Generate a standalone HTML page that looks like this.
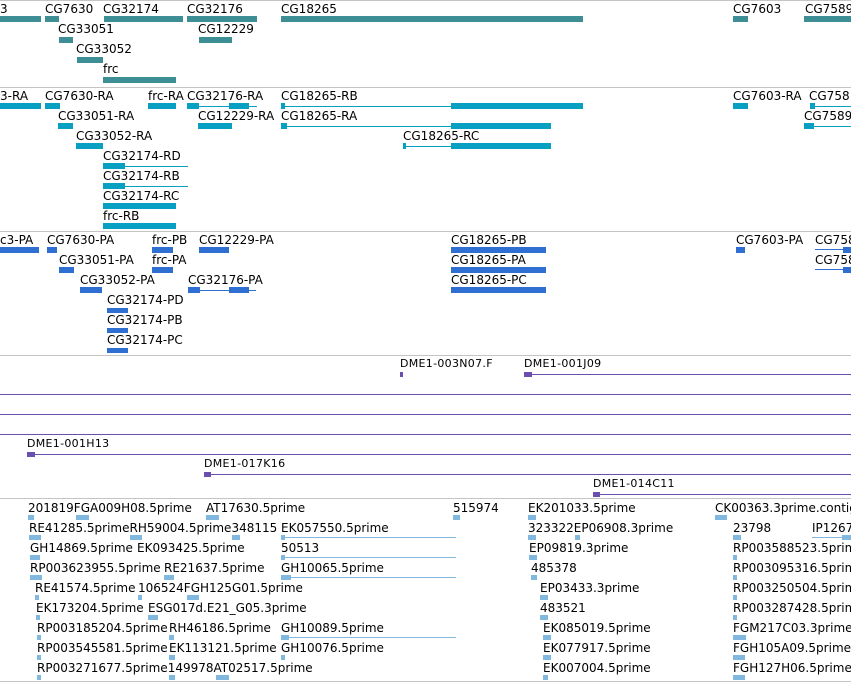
<!DOCTYPE html>
<html><head><meta charset="utf-8">
<style>
html,body{margin:0;padding:0;background:#fff;width:851px;height:683px;overflow:hidden;position:relative}
.l{position:absolute;font:12px/14px "DejaVu Sans",sans-serif;color:#000;white-space:nowrap}
.d{position:absolute;font:11px/13px "DejaVu Sans",sans-serif;letter-spacing:0.3px;color:#000;white-space:nowrap}
.b{position:absolute;height:6px}
.e{position:absolute;height:5px;background:#80b8e0}
.n{position:absolute;height:1px}
.s{position:absolute;left:0;width:851px;height:1px;background:#c4c4c4}
.c1{background:#3d8f95}.c2{background:#08a0c2}.c3{background:#2f6fd2}.c4{background:#6a4fb0}.c5{background:#80b8e0}
</style></head><body>
<div class="s" style="top:0"></div>
<div class="s" style="top:87px"></div>
<div class="s" style="top:231px"></div>
<div class="s" style="top:355px"></div>
<div class="s" style="top:498px"></div>
<div class="s" style="top:681px"></div>

<!-- Track 1 genes -->
<div class="l" style="left:0;top:2px">3</div><div class="b c1" style="left:0;top:16px;width:41px"></div>
<div class="l" style="left:45px;top:2px">CG7630</div><div class="b c1" style="left:45px;top:16px;width:14px"></div>
<div class="l" style="left:103px;top:2px">CG32174</div><div class="b c1" style="left:104px;top:16px;width:79px"></div>
<div class="l" style="left:187px;top:2px">CG32176</div><div class="b c1" style="left:187px;top:16px;width:70px"></div>
<div class="l" style="left:281px;top:2px">CG18265</div><div class="b c1" style="left:281px;top:16px;width:302px"></div>
<div class="l" style="left:733px;top:2px">CG7603</div><div class="b c1" style="left:733px;top:16px;width:15px"></div>
<div class="l" style="left:805px;top:2px">CG7589</div><div class="b c1" style="left:804px;top:16px;width:47px"></div>
<div class="l" style="left:58px;top:22px">CG33051</div><div class="b c1" style="left:59px;top:37px;width:14px"></div>
<div class="l" style="left:198px;top:22px">CG12229</div><div class="b c1" style="left:199px;top:37px;width:33px"></div>
<div class="l" style="left:76px;top:42px">CG33052</div><div class="b c1" style="left:77px;top:57px;width:26px"></div>
<div class="l" style="left:103px;top:62px">frc</div><div class="b c1" style="left:103px;top:77px;width:73px"></div>

<!-- Track 2 transcripts -->
<div class="l" style="left:0;top:89px">3-RA</div><div class="b c2" style="left:0;top:103px;width:41px"></div>
<div class="l" style="left:45px;top:89px">CG7630-RA</div><div class="b c2" style="left:45px;top:103px;width:15px"></div>
<div class="l" style="left:148px;top:89px">frc-RA</div><div class="b c2" style="left:148px;top:103px;width:28px"></div>
<div class="l" style="left:187px;top:89px">CG32176-RA</div><div class="n c2" style="left:187px;top:106px;width:70px"></div><div class="b c2" style="left:187px;top:103px;width:12px"></div><div class="b c2" style="left:229px;top:103px;width:20px"></div>
<div class="l" style="left:281px;top:89px">CG18265-RB</div><div class="n c2" style="left:281px;top:106px;width:170px"></div><div class="b c2" style="left:451px;top:103px;width:132px"></div><div class="b c2" style="left:281px;top:103px;width:4px"></div>
<div class="l" style="left:733px;top:89px">CG7603-RA</div><div class="b c2" style="left:733px;top:103px;width:15px"></div>
<div class="l" style="left:809px;top:89px">CG758</div><div class="n c2" style="left:810px;top:106px;width:41px"></div><div class="b c2" style="left:810px;top:103px;width:5px"></div>
<div class="l" style="left:58px;top:109px">CG33051-RA</div><div class="b c2" style="left:58px;top:123px;width:15px"></div>
<div class="l" style="left:198px;top:109px">CG12229-RA</div><div class="b c2" style="left:198px;top:123px;width:34px"></div>
<div class="l" style="left:281px;top:109px">CG18265-RA</div><div class="n c2" style="left:281px;top:126px;width:170px"></div><div class="b c2" style="left:281px;top:123px;width:6px"></div><div class="b c2" style="left:451px;top:123px;width:100px"></div>
<div class="l" style="left:804px;top:109px">CG7589</div><div class="n c2" style="left:804px;top:126px;width:47px"></div><div class="b c2" style="left:804px;top:123px;width:10px"></div>
<div class="l" style="left:76px;top:129px">CG33052-RA</div><div class="b c2" style="left:76px;top:143px;width:27px"></div>
<div class="l" style="left:403px;top:129px">CG18265-RC</div><div class="n c2" style="left:403px;top:146px;width:48px"></div><div class="b c2" style="left:403px;top:143px;width:3px"></div><div class="b c2" style="left:451px;top:143px;width:100px"></div>
<div class="l" style="left:103px;top:149px">CG32174-RD</div><div class="n c2" style="left:103px;top:166px;width:85px"></div><div class="b c2" style="left:103px;top:163px;width:22px"></div>
<div class="l" style="left:103px;top:169px">CG32174-RB</div><div class="n c2" style="left:103px;top:186px;width:85px"></div><div class="b c2" style="left:103px;top:183px;width:22px"></div>
<div class="l" style="left:103px;top:189px">CG32174-RC</div><div class="b c2" style="left:103px;top:203px;width:73px"></div>
<div class="l" style="left:103px;top:209px">frc-RB</div><div class="b c2" style="left:103px;top:223px;width:73px"></div>

<!-- Track 3 proteins -->
<div class="l" style="left:0;top:233px">c3-PA</div><div class="b c3" style="left:0;top:247px;width:39px"></div>
<div class="l" style="left:47px;top:233px">CG7630-PA</div><div class="b c3" style="left:47px;top:247px;width:10px"></div>
<div class="l" style="left:152px;top:233px">frc-PB</div><div class="b c3" style="left:152px;top:247px;width:21px"></div>
<div class="l" style="left:199px;top:233px">CG12229-PA</div><div class="b c3" style="left:199px;top:247px;width:30px"></div>
<div class="l" style="left:451px;top:233px">CG18265-PB</div><div class="b c3" style="left:451px;top:247px;width:95px"></div>
<div class="l" style="left:736px;top:233px">CG7603-PA</div><div class="b c3" style="left:736px;top:247px;width:9px"></div>
<div class="l" style="left:815px;top:233px">CG758</div><div class="n c3" style="left:815px;top:249px;width:36px"></div><div class="b c3" style="left:843px;top:247px;width:8px"></div>
<div class="l" style="left:59px;top:253px">CG33051-PA</div><div class="b c3" style="left:59px;top:267px;width:15px"></div>
<div class="l" style="left:152px;top:253px">frc-PA</div><div class="b c3" style="left:152px;top:267px;width:21px"></div>
<div class="l" style="left:451px;top:253px">CG18265-PA</div><div class="b c3" style="left:451px;top:267px;width:95px"></div>
<div class="l" style="left:815px;top:253px">CG758</div><div class="n c3" style="left:815px;top:269px;width:36px"></div><div class="b c3" style="left:843px;top:267px;width:8px"></div>
<div class="l" style="left:80px;top:273px">CG33052-PA</div><div class="b c3" style="left:80px;top:287px;width:22px"></div>
<div class="l" style="left:188px;top:273px">CG32176-PA</div><div class="n c3" style="left:188px;top:290px;width:68px"></div><div class="b c3" style="left:188px;top:287px;width:12px"></div><div class="b c3" style="left:229px;top:287px;width:20px"></div>
<div class="l" style="left:451px;top:273px">CG18265-PC</div><div class="b c3" style="left:451px;top:287px;width:95px"></div>
<div class="l" style="left:107px;top:293px">CG32174-PD</div><div class="b c3" style="left:107px;top:308px;width:21px;height:5px"></div>
<div class="l" style="left:107px;top:313px">CG32174-PB</div><div class="b c3" style="left:107px;top:328px;width:21px;height:5px"></div>
<div class="l" style="left:107px;top:333px">CG32174-PC</div><div class="b c3" style="left:107px;top:348px;width:21px;height:5px"></div>

<!-- Track 4 DME -->
<div class="d" style="left:400px;top:357px">DME1-003N07.F</div><div class="b c4" style="left:400px;top:372px;width:3px;height:5px"></div>
<div class="d" style="left:524px;top:357px">DME1-001J09</div><div class="n c4" style="left:524px;top:374px;width:327px"></div><div class="b c4" style="left:524px;top:372px;width:8px;height:5px"></div>
<div class="n c4" style="left:0;top:394px;width:851px"></div>
<div class="n c4" style="left:0;top:414px;width:851px"></div>
<div class="n c4" style="left:0;top:434px;width:851px"></div>
<div class="d" style="left:27px;top:437px">DME1-001H13</div><div class="n c4" style="left:27px;top:454px;width:824px"></div><div class="b c4" style="left:27px;top:452px;width:8px;height:5px"></div>
<div class="d" style="left:204px;top:457px">DME1-017K16</div><div class="n c4" style="left:204px;top:474px;width:647px"></div><div class="b c4" style="left:204px;top:472px;width:7px;height:5px"></div>
<div class="d" style="left:593px;top:477px">DME1-014C11</div><div class="n c4" style="left:593px;top:494px;width:258px"></div><div class="b c4" style="left:593px;top:492px;width:7px;height:5px"></div>

<!-- Track 5 ESTs -->
<div class="l" style="left:28px;top:501px">201819FGA009H08.5prime</div><div class="e" style="left:28px;top:515px;width:6px"></div><div class="e" style="left:76px;top:515px;width:13px"></div>
<div class="l" style="left:206px;top:501px">AT17630.5prime</div><div class="e" style="left:206px;top:515px;width:13px"></div>
<div class="l" style="left:453px;top:501px">515974</div><div class="e" style="left:453px;top:515px;width:7px"></div>
<div class="l" style="left:528px;top:501px">EK201033.5prime</div><div class="e" style="left:528px;top:515px;width:8px"></div>
<div class="l" style="left:715px;top:501px">CK00363.3prime.contig</div><div class="e" style="left:715px;top:515px;width:12px"></div>

<div class="l" style="left:29px;top:521px">RE41285.5primeRH59004.5prime348115</div><div class="e" style="left:29px;top:535px;width:12px"></div><div class="e" style="left:130px;top:535px;width:12px"></div><div class="e" style="left:232px;top:535px;width:8px"></div>
<div class="l" style="left:281px;top:521px">EK057550.5prime</div><div class="n c5" style="left:281px;top:537px;width:175px"></div><div class="e" style="left:281px;top:535px;width:4px"></div>
<div class="l" style="left:528px;top:521px">323322EP06908.3prime</div><div class="e" style="left:528px;top:535px;width:8px"></div><div class="e" style="left:575px;top:535px;width:5px"></div>
<div class="l" style="left:733px;top:521px">23798</div><div class="e" style="left:733px;top:535px;width:8px"></div>
<div class="l" style="left:812px;top:521px">IP1267</div><div class="n c5" style="left:812px;top:537px;width:39px"></div><div class="e" style="left:842px;top:535px;width:9px"></div>

<div class="l" style="left:30px;top:541px">GH14869.5prime</div><div class="e" style="left:30px;top:555px;width:10px"></div>
<div class="l" style="left:137px;top:541px">EK093425.5prime</div>
<div class="l" style="left:281px;top:541px">50513</div><div class="n c5" style="left:281px;top:557px;width:175px"></div><div class="e" style="left:281px;top:555px;width:4px"></div>
<div class="l" style="left:529px;top:541px">EP09819.3prime</div><div class="e" style="left:529px;top:555px;width:8px"></div>
<div class="l" style="left:733px;top:541px">RP003588523.5prime</div><div class="e" style="left:733px;top:555px;width:4px"></div>

<div class="l" style="left:30px;top:561px">RP003623955.5prime</div><div class="e" style="left:30px;top:575px;width:12px"></div>
<div class="l" style="left:164px;top:561px">RE21637.5prime</div><div class="e" style="left:164px;top:575px;width:10px"></div>
<div class="l" style="left:281px;top:561px">GH10065.5prime</div><div class="n c5" style="left:281px;top:577px;width:175px"></div><div class="e" style="left:281px;top:575px;width:10px"></div>
<div class="l" style="left:531px;top:561px">485378</div><div class="e" style="left:531px;top:575px;width:6px"></div>
<div class="l" style="left:733px;top:561px">RP003095316.5prime</div><div class="e" style="left:733px;top:575px;width:4px"></div>

<div class="l" style="left:35px;top:581px">RE41574.5prime</div><div class="e" style="left:35px;top:595px;width:4px"></div>
<div class="l" style="left:138px;top:581px">106524FGH125G01.5prime</div><div class="e" style="left:138px;top:595px;width:4px"></div><div class="e" style="left:187px;top:595px;width:12px"></div>
<div class="l" style="left:540px;top:581px">EP03433.3prime</div><div class="e" style="left:540px;top:595px;width:8px"></div>
<div class="l" style="left:733px;top:581px">RP003250504.5prime</div><div class="e" style="left:733px;top:595px;width:4px"></div>

<div class="l" style="left:36px;top:601px">EK173204.5prime</div><div class="e" style="left:36px;top:615px;width:4px"></div>
<div class="l" style="left:148px;top:601px">ESG017d.E21_G05.3prime</div><div class="e" style="left:148px;top:615px;width:10px"></div>
<div class="l" style="left:540px;top:601px">483521</div><div class="e" style="left:540px;top:615px;width:8px"></div>
<div class="l" style="left:733px;top:601px">RP003287428.5prime</div><div class="e" style="left:733px;top:615px;width:4px"></div>

<div class="l" style="left:37px;top:621px">RP003185204.5prime</div><div class="e" style="left:37px;top:635px;width:4px"></div>
<div class="l" style="left:169px;top:621px">RH46186.5prime</div><div class="e" style="left:169px;top:635px;width:5px"></div>
<div class="l" style="left:281px;top:621px">GH10089.5prime</div><div class="n c5" style="left:281px;top:637px;width:175px"></div><div class="e" style="left:281px;top:635px;width:8px"></div>
<div class="l" style="left:543px;top:621px">EK085019.5prime</div><div class="e" style="left:543px;top:635px;width:8px"></div>
<div class="l" style="left:733px;top:621px">FGM217C03.3prime</div><div class="e" style="left:733px;top:635px;width:13px"></div>

<div class="l" style="left:37px;top:641px">RP003545581.5prime</div><div class="e" style="left:37px;top:655px;width:4px"></div>
<div class="l" style="left:169px;top:641px">EK113121.5prime</div><div class="e" style="left:169px;top:655px;width:6px"></div>
<div class="l" style="left:281px;top:641px">GH10076.5prime</div><div class="e" style="left:281px;top:655px;width:4px"></div>
<div class="l" style="left:543px;top:641px">EK077917.5prime</div><div class="e" style="left:543px;top:655px;width:8px"></div>
<div class="l" style="left:733px;top:641px">FGH105A09.5prime</div><div class="e" style="left:733px;top:655px;width:12px"></div>

<div class="l" style="left:37px;top:661px">RP003271677.5prime149978AT02517.5prime</div><div class="e" style="left:37px;top:675px;width:4px"></div><div class="e" style="left:169px;top:675px;width:6px"></div><div class="e" style="left:216px;top:675px;width:13px"></div>
<div class="l" style="left:543px;top:661px">EK007004.5prime</div><div class="e" style="left:543px;top:675px;width:5px"></div>
<div class="l" style="left:733px;top:661px">FGH127H06.5prime</div><div class="e" style="left:733px;top:675px;width:12px"></div>
</body></html>
